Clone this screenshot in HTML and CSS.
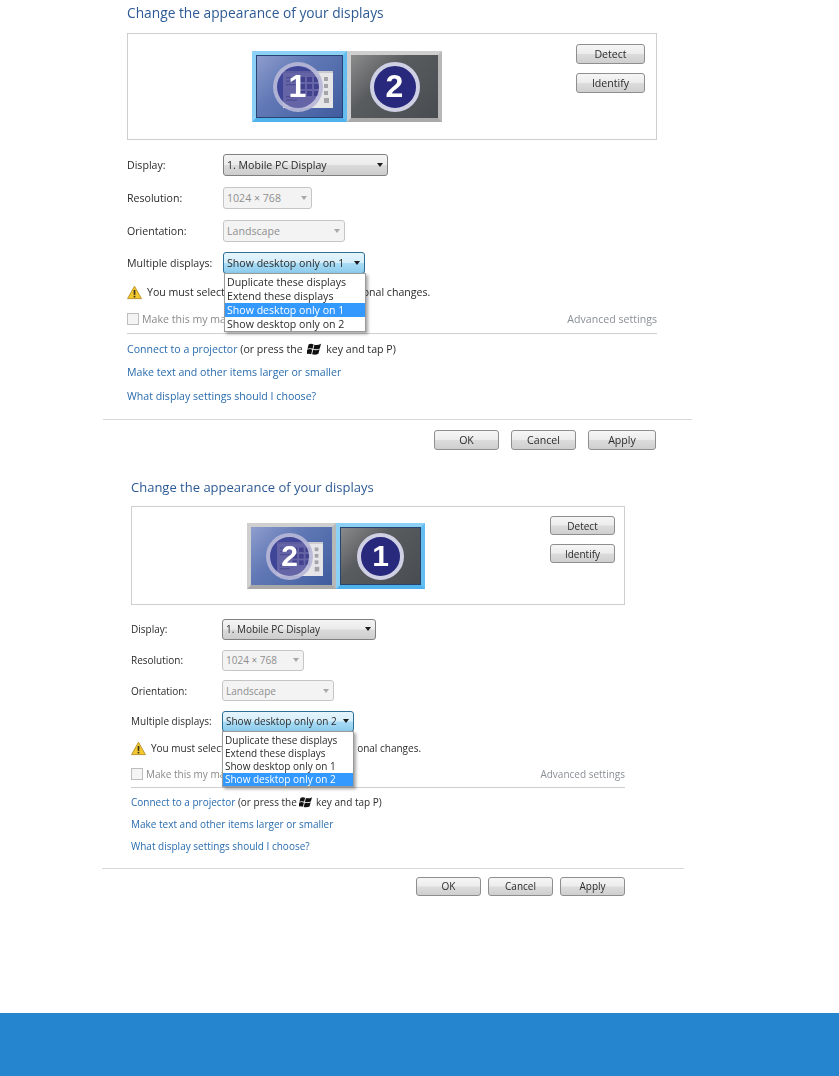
FILE: index.html
```html
<!DOCTYPE html>
<html lang="en">
<head>
    <meta charset="UTF-8">
    <title>Change the appearance of your displays</title>
    <link rel="stylesheet" href="styles.css">
</head>
<body>
    <svg class="defs" width="0" height="0">
        <symbol id="win-logo" viewBox="0 0 14 12">
            <path d="M1.6 1.6 Q3.6 .2 6.6 1.4 L5.5 5.8 Q3 4.8 .5 5.8 Z"/>
            <path d="M7.4 1.7 Q10.4 2.8 14 .8 L12.8 5.4 Q9.6 6.8 6.4 5.9 Z"/>
            <path d="M.3 6.6 Q2.9 5.6 5.3 6.7 L4.2 11.2 Q2 10.2 -.8 11.2 Z"/>
            <path d="M6.2 6.8 Q9.4 7.7 12.6 6.2 L11.4 10.8 Q8.4 12.2 5.1 11.3 Z"/>
        </symbol>
        <symbol id="warn" viewBox="0 0 16 15">
            <path d="M8 .8 L15.4 14 H.6 Z" fill="#f4c92e" stroke="#b8922a" stroke-width="1" stroke-linejoin="round"/>
            <rect x="7.1" y="4.8" width="1.8" height="5.2" fill="#3a3320"/>
            <rect x="7.1" y="11" width="1.8" height="1.8" fill="#3a3320"/>
        </symbol>
        <symbol id="tile" viewBox="0 0 50 37">
            <rect width="50" height="37" fill="#e6e6e8"/>
            <rect width="50" height="2" fill="#c9c9cf"/>
            <g fill="#8f8fa8">
                <rect x="3" y="6" width="11" height="1.3"/>
                <rect x="3" y="9.5" width="9" height="1.3"/>
                <rect x="3" y="13" width="11" height="1.3"/>
                <rect x="3" y="25" width="9" height="1.3"/>
                <rect x="3" y="28.5" width="11" height="1.3"/>
            </g>
            <g fill="#6a6a92">
                <rect x="17" y="6" width="5" height="5"/><rect x="24" y="6" width="5" height="5"/><rect x="31" y="6" width="5" height="5"/>
                <rect x="17" y="13" width="5" height="5"/><rect x="24" y="13" width="5" height="5"/><rect x="31" y="13" width="5" height="5"/>
                <rect x="17" y="20" width="5" height="5"/><rect x="24" y="20" width="5" height="5"/><rect x="31" y="20" width="5" height="5"/>
            </g>
            <g fill="#a3a3a8">
                <rect x="41" y="6" width="4" height="4"/>
                <rect x="41" y="13" width="4" height="4"/>
                <rect x="41" y="20" width="4" height="4"/>
                <rect x="41" y="27" width="5" height="5"/>
            </g>
        </symbol>
    </svg>

    <section class="panel panel-one">
        <h2 class="title">Change the appearance of your displays</h2>
        <div class="preview">
            <div class="monitors">
                <div class="monitor desktop selected">
                    <svg class="tile"><use href="#tile"/></svg>
                    <span class="badge">1</span>
                </div>
                <div class="monitor off">
                    <span class="badge">2</span>
                </div>
            </div>
            <div class="preview-buttons">
                <button class="btn">Detect</button>
                <button class="btn">Identify</button>
            </div>
        </div>
        <div class="field">
            <label>Display:</label>
            <div class="select w-display"><span>1. Mobile PC Display</span><i class="arrow"></i></div>
        </div>
        <div class="field">
            <label>Resolution:</label>
            <div class="select disabled w-res"><span>1024 × 768</span><i class="arrow"></i></div>
        </div>
        <div class="field">
            <label>Orientation:</label>
            <div class="select disabled w-orient"><span>Landscape</span><i class="arrow"></i></div>
        </div>
        <div class="field">
            <label>Multiple displays:</label>
            <div class="select open w-multi">
                <span>Show desktop only on 1</span><i class="arrow"></i>
                <ul class="menu">
                    <li>Duplicate these displays</li>
                    <li>Extend these displays</li>
                    <li class="active">Show desktop only on 1</li>
                    <li>Show desktop only on 2</li>
                </ul>
            </div>
        </div>
        <div class="warning">
            <svg class="warn-icon"><use href="#warn"/></svg>
            <span>You must select <b class="gap"></b>onal changes.</span>
        </div>
        <div class="options">
            <div class="check"><i class="box"></i><span>Make this my ma</span></div>
            <a class="advanced">Advanced settings</a>
        </div>
        <div class="links">
            <p><a>Connect to a projector</a> (or press the <svg class="win"><use href="#win-logo"/></svg> key and tap P)</p>
            <p><a>Make text and other items larger or smaller</a></p>
            <p><a>What display settings should I choose?</a></p>
        </div>
        <div class="actions">
            <button class="btn">OK</button>
            <button class="btn">Cancel</button>
            <button class="btn">Apply</button>
        </div>
    </section>

    <section class="panel panel-two">
        <h2 class="title">Change the appearance of your displays</h2>
        <div class="preview">
            <div class="monitors">
                <div class="monitor desktop">
                    <svg class="tile"><use href="#tile"/></svg>
                    <span class="badge">2</span>
                </div>
                <div class="monitor off selected">
                    <span class="badge">1</span>
                </div>
            </div>
            <div class="preview-buttons">
                <button class="btn">Detect</button>
                <button class="btn">Identify</button>
            </div>
        </div>
        <div class="field">
            <label>Display:</label>
            <div class="select w-display"><span>1. Mobile PC Display</span><i class="arrow"></i></div>
        </div>
        <div class="field">
            <label>Resolution:</label>
            <div class="select disabled w-res"><span>1024 × 768</span><i class="arrow"></i></div>
        </div>
        <div class="field">
            <label>Orientation:</label>
            <div class="select disabled w-orient"><span>Landscape</span><i class="arrow"></i></div>
        </div>
        <div class="field">
            <label>Multiple displays:</label>
            <div class="select open w-multi">
                <span>Show desktop only on 2</span><i class="arrow"></i>
                <ul class="menu">
                    <li>Duplicate these displays</li>
                    <li>Extend these displays</li>
                    <li>Show desktop only on 1</li>
                    <li class="active">Show desktop only on 2</li>
                </ul>
            </div>
        </div>
        <div class="warning">
            <svg class="warn-icon"><use href="#warn"/></svg>
            <span>You must select <b class="gap"></b>onal changes.</span>
        </div>
        <div class="options">
            <div class="check"><i class="box"></i><span>Make this my ma</span></div>
            <a class="advanced">Advanced settings</a>
        </div>
        <div class="links">
            <p><a>Connect to a projector</a> (or press the <svg class="win"><use href="#win-logo"/></svg> key and tap P)</p>
            <p><a>Make text and other items larger or smaller</a></p>
            <p><a>What display settings should I choose?</a></p>
        </div>
        <div class="actions">
            <button class="btn">OK</button>
            <button class="btn">Cancel</button>
            <button class="btn">Apply</button>
        </div>
    </section>

    <footer class="band"></footer>
</body>
</html>
```

FILE: styles.css
```css
* {
    margin: 0;
    padding: 0;
    box-sizing: border-box;
}

body {
    position: relative;
    height: 1076px;
    overflow: hidden;
    background: #fff;
    font-family: "Open Sans", "Noto Sans", sans-serif;
    color: #2b2b2b;
}

.defs {
    position: absolute;
}

/* panel sizes: the two screenshots are scaled differently */
.panel {
    --left: 127px;
    --box-w: 530px;
    --box-h: 107px;
    --box-gap: 9px;
    --label-w: 96px;
    --row: 32.7px;
    --sel-h: 22px;
    --item-h: 14px;
    --menu-top: 1px;
    --mon-w: 95px;
    --mon-h: 71px;
    --badge: 50px;
    --btn-w: 69px;
    --btn-h: 20px;
    --warn-top: 3px;
    --opt-h: 28px;
    --link-h: 23.5px;
    --link-top: 4px;
    --link-line: 22px;
    --act-top: 11px;
    padding-left: var(--left);
    font-size: 10.6px;
    filter: blur(0.45px);
}

.panel-one {
    padding-top: 4px;
    height: 478px;
}

.panel-two {
    --left: 131px;
    --box-w: 494px;
    --box-h: 99px;
    --box-gap: 9px;
    --label-w: 91px;
    --row: 30.7px;
    --sel-h: 21px;
    --item-h: 13px;
    --menu-top: 2px;
    --mon-w: 89px;
    --mon-h: 66px;
    --badge: 47px;
    --btn-w: 65px;
    --btn-h: 19px;
    --warn-top: 2px;
    --opt-h: 26px;
    --link-h: 22px;
    --link-top: 4px;
    --link-line: 21px;
    --act-top: 10px;
    font-size: 10px;
    height: 535px;
}

.title {
    font-size: 13.75px;
    font-weight: 400;
    line-height: 18px;
    color: #2d5a94;
    height: 29px;
}

.panel-two .title {
    font-size: 13px;
    height: 28px;
}

.preview {
    position: relative;
    width: var(--box-w);
    height: var(--box-h);
    border: 1px solid #cfcfcf;
    display: flex;
    padding: 17px 0 0 124px;
    margin-bottom: var(--box-gap);
}

.panel-two .preview {
    padding: 16px 0 0 115px;
}

.monitors {
    display: flex;
}

.monitor {
    position: relative;
    width: var(--mon-w);
    height: var(--mon-h);
    display: flex;
    align-items: center;
    justify-content: center;
    border: 4px solid #b9b9b9;
    border-color: #cfcfcf #b8b8b8 #a9a9a9 #cfcfcf;
    overflow: hidden;
}

.monitor.desktop {
    background: linear-gradient(135deg, #8f9ecd 0%, #6179b6 38%, #405c9e 100%);
}

.monitor.off {
    background: linear-gradient(135deg, #8c8c8c 0%, #595c5f 38%, #484c50 100%);
}

.monitor.selected {
    border-color: #8dd0f6 #63bdf0 #4fb2ec #8dd0f6;
    box-shadow: inset 0 0 0 1px #26446f;
}

.tile {
    position: absolute;
    right: 10px;
    top: 16px;
    width: 50px;
    height: 37px;
}

.panel-two .tile {
    right: 9px;
    top: 15px;
    width: 46px;
    height: 34px;
}

.badge {
    position: relative;
    width: var(--badge);
    height: var(--badge);
    border-radius: 50%;
    border: 4px solid #cfd0e4;
    background: #28287d;
    color: #fff;
    font-family: "Liberation Sans", sans-serif;
    font-size: 32px;
    font-weight: 700;
    display: flex;
    align-items: center;
    justify-content: center;
}

.desktop .badge {
    left: -2px;
    background: rgba(50, 50, 140, 0.72);
    border-color: rgba(225, 225, 240, 0.7);
}

.panel-two .badge {
    font-size: 30px;
}

.preview-buttons {
    position: absolute;
    right: 11px;
    top: 10px;
    display: flex;
    flex-direction: column;
    gap: 9px;
}

.panel-two .preview-buttons {
    right: 9px;
    top: 9px;
}

.btn {
    width: var(--btn-w);
    height: var(--btn-h);
    border: 1px solid #8e8e8e;
    border-radius: 3px;
    background: linear-gradient(#f6f6f6 0%, #ececec 48%, #dcdcdc 52%, #cfcfcf 100%);
    font-family: inherit;
    font-size: inherit;
    color: #2b2b2b;
}

.field {
    display: flex;
    align-items: center;
    height: var(--row);
    position: relative;
}

.field label {
    width: var(--label-w);
}

.select {
    position: relative;
    height: var(--sel-h);
    display: flex;
    align-items: center;
    justify-content: space-between;
    padding: 0 4px 0 3px;
    border: 1px solid #808080;
    border-radius: 3px;
    white-space: nowrap;
    background: linear-gradient(#f4f4f4 0%, #ebebeb 48%, #dadada 52%, #cdcdcd 100%);
}

.w-display { width: 165px; }
.w-res { width: 89px; }
.w-orient { width: 122px; }
.w-multi { width: 142px; }

.panel-two .w-display { width: 154px; }
.panel-two .w-res { width: 82px; }
.panel-two .w-orient { width: 112px; }
.panel-two .w-multi { width: 132px; }

.select.disabled {
    border-color: #c5c5c5;
    background: #f3f3f3;
    color: #8f8f8f;
}

.select.open {
    border-color: #2f6f96;
    background: linear-gradient(#e6f5fc 0%, #d5eefb 48%, #a9dcf6 52%, #8ccbec 100%);
    z-index: 2;
}

.arrow {
    width: 0;
    height: 0;
    border-left: 3.5px solid transparent;
    border-right: 3.5px solid transparent;
    border-top: 4px solid #1c1c1c;
}

.disabled .arrow {
    border-top-color: #a8a8a8;
}

.menu {
    position: absolute;
    left: 0;
    top: 100%;
    width: calc(100% + 2px);
    list-style: none;
    background: #fff;
    border: 1px solid #9a9a9a;
    box-shadow: 2px 2px 3px rgba(0, 0, 0, 0.35);
    padding-top: var(--menu-top);
}

.panel-two .menu {
    left: -1px;
}

.menu li {
    height: var(--item-h);
    line-height: var(--item-h);
    padding-left: 2px;
    white-space: nowrap;
}

.menu li.active {
    background: #3399ff;
    color: #fff;
}

.warning {
    display: flex;
    align-items: center;
    gap: 5px;
    height: 19px;
    margin-top: var(--warn-top);
}

.warn-icon {
    width: 15px;
    height: 15px;
}

.gap {
    display: inline-block;
    width: 135px;
}

.panel-two .gap {
    width: 130px;
}

.options {
    width: var(--box-w);
    height: var(--opt-h);
    margin-top: 4px;
    display: flex;
    align-items: center;
    justify-content: space-between;
    border-bottom: 1px solid #cfcfcf;
    color: #8a8a8a;
}

.check {
    display: flex;
    align-items: center;
    gap: 3px;
}

.box {
    width: 12px;
    height: 12px;
    border: 1px solid #bdbdbd;
    background: #f4f4f4;
}

.advanced {
    color: #8a8f96;
}

.links {
    padding-top: var(--link-top);
}

.links p {
    height: var(--link-h);
    line-height: var(--link-line);
}

.links a {
    color: #2a6cae;
}

.win {
    width: 14px;
    height: 12px;
    margin: 0 2px;
    vertical-align: -2px;
    fill: #111;
}

.panel-two .win {
    width: 13px;
    margin: 0 1px 0 0;
}

.actions {
    position: relative;
    width: var(--box-w);
    margin-top: var(--act-top);
    padding-top: 11px;
    display: flex;
    justify-content: flex-end;
    gap: 12px;
}

.panel-one .actions {
    padding-right: 1px;
}

.panel-one .actions .btn {
    width: 65px;
}

.panel-one .actions .btn:last-child {
    width: 68px;
}

/* the divider above the buttons is wider than the content */
.actions::before {
    content: "";
    position: absolute;
    top: 0;
    left: -24px;
    width: 589px;
    border-top: 1px solid #d8d8d8;
}

.panel-two .actions::before {
    left: -29px;
    width: 582px;
}

.panel-two .actions {
    gap: 7px;
    padding-top: 9px;
}

.band {
    position: absolute;
    left: 0;
    right: 0;
    top: 1013px;
    height: 63px;
    background: #2585cf;
}
```
